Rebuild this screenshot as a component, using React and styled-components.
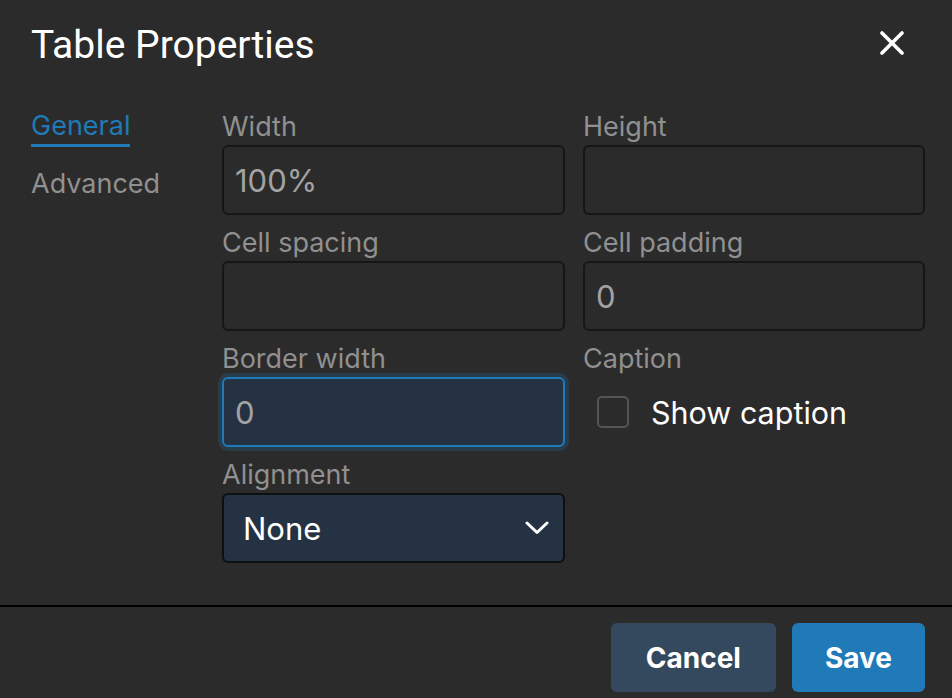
import React from 'react';
import styled, { createGlobalStyle } from 'styled-components';

const GlobalStyle = createGlobalStyle`
  html, body {
    margin: 0;
    padding: 0;
    background: #2b2b2b;
  }
  * {
    box-sizing: border-box;
  }
`;

const Dialog = styled.div`
  width: 952px;
  height: 698px;
  overflow: hidden;
  background: #2b2b2b;
  font-family: Inter, 'Noto Sans', sans-serif;
  display: flex;
  flex-direction: column;
`;

const Header = styled.div`
  display: flex;
  align-items: flex-start;
  justify-content: space-between;
  padding: 19px 36px 0 31px;
  height: 90px;
  flex-shrink: 0;
`;

const Title = styled.h1`
  margin: 0;
  font-family: Roboto, Inter, sans-serif;
  font-size: 39px;
  font-weight: 400;
  color: #ffffff;
  line-height: 52px;
`;

const CloseButton = styled.button`
  width: 48px;
  height: 48px;
  border: none;
  background: transparent;
  padding: 0;
  display: flex;
  align-items: center;
  justify-content: center;
  cursor: pointer;
`;

const Body = styled.div`
  display: flex;
  padding: 18px 27px 42px 31px;
  flex: 1;
`;

const TabList = styled.div`
  width: 191px;
  flex-shrink: 0;
  display: flex;
  flex-direction: column;
  align-items: flex-start;
`;

const Tab = styled.div`
  font-size: 27px;
  line-height: 36px;
  color: ${({ active }) => (active ? '#207ab7' : '#909090')};
  border-bottom: 3px solid ${({ active }) => (active ? '#207ab7' : 'transparent')};
  margin-bottom: 19px;
`;

const FormGrid = styled.div`
  flex: 1;
  display: grid;
  grid-template-columns: 343px 342px;
  column-gap: 18px;
  row-gap: 9px;
  align-content: start;
`;

const Field = styled.div`
  display: flex;
  flex-direction: column;
`;

const Label = styled.label`
  font-size: 27px;
  line-height: 37px;
  color: #909090;
`;

const Input = styled.div`
  height: 70px;
  border-radius: 6px;
  border: 2px solid ${({ focused }) => (focused ? '#207ab7' : '#161616')};
  background: ${({ focused }) => (focused ? '#253243' : '#2b2b2b')};
  box-shadow: ${({ focused }) => (focused ? '0 0 0 4px rgba(32, 122, 183, 0.22)' : 'none')};
  display: flex;
  align-items: center;
  padding: 0 11px;
  font-size: 31px;
  color: #a3a3a3;
`;

const Select = styled.div`
  height: 70px;
  border-radius: 6px;
  border: 2px solid #0f0f0f;
  background: #253243;
  display: flex;
  align-items: center;
  justify-content: space-between;
  padding: 0 14px 0 19px;
  font-size: 31px;
  color: #ffffff;
`;

const CheckRow = styled.div`
  display: flex;
  align-items: center;
  height: 70px;
  padding-left: 14px;
  gap: 22px;
  font-size: 30.5px;
  color: #ffffff;
`;

const CheckBox = styled.span`
  width: 32px;
  height: 32px;
  border: 2px solid #545454;
  border-radius: 5px;
  flex-shrink: 0;
`;

const Footer = styled.div`
  border-top: 2px solid #000000;
  display: flex;
  justify-content: flex-end;
  gap: 16px;
  padding: 16px 27px 16px;
  flex-shrink: 0;
`;

const Button = styled.button`
  height: 69px;
  padding: 0 ${({ primary }) => (primary ? '33px' : '35px')};
  border: none;
  border-radius: 6px;
  background: ${({ primary }) => (primary ? '#207ab7' : '#34495e')};
  color: #ffffff;
  font-family: Inter, 'Noto Sans', sans-serif;
  font-size: 28px;
  font-weight: 700;
  cursor: pointer;
`;

const CloseIcon = () => (
  <svg width="24" height="24" viewBox="0 0 24 24">
    <path d="M2 2 L22 22 M22 2 L2 22" stroke="#ffffff" strokeWidth="3.6" strokeLinecap="round" />
  </svg>
);

const ChevronIcon = () => (
  <svg width="24" height="14" viewBox="0 0 24 14">
    <path d="M2 2 L12 11.5 L22 2" stroke="#ffffff" strokeWidth="3" fill="none" strokeLinecap="round" strokeLinejoin="round" />
  </svg>
);

export default function App() {
  return (
    <>
      <GlobalStyle />
      <Dialog>
        <Header>
          <Title>Table Properties</Title>
          <CloseButton aria-label="Close">
            <CloseIcon />
          </CloseButton>
        </Header>
        <Body>
          <TabList>
            <Tab active>General</Tab>
            <Tab>Advanced</Tab>
          </TabList>
          <FormGrid>
            <Field>
              <Label>Width</Label>
              <Input>100%</Input>
            </Field>
            <Field>
              <Label>Height</Label>
              <Input />
            </Field>
            <Field>
              <Label>Cell spacing</Label>
              <Input />
            </Field>
            <Field>
              <Label>Cell padding</Label>
              <Input>0</Input>
            </Field>
            <Field>
              <Label>Border width</Label>
              <Input focused>0</Input>
            </Field>
            <Field>
              <Label>Caption</Label>
              <CheckRow>
                <CheckBox />
                Show caption
              </CheckRow>
            </Field>
            <Field>
              <Label>Alignment</Label>
              <Select>
                None
                <ChevronIcon />
              </Select>
            </Field>
          </FormGrid>
        </Body>
        <Footer>
          <Button>Cancel</Button>
          <Button primary>Save</Button>
        </Footer>
      </Dialog>
    </>
  );
}
